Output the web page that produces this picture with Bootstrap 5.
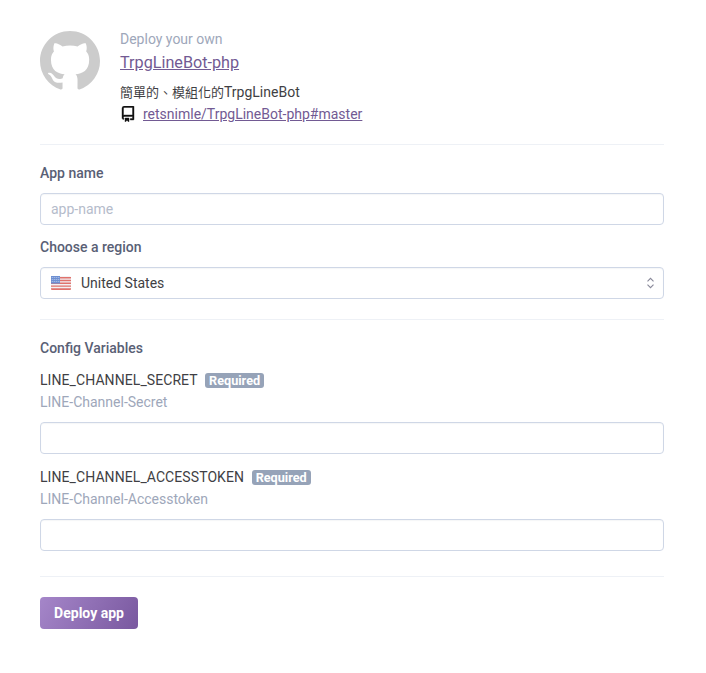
<!DOCTYPE html>
<html lang="en">
<head>
    <meta charset="UTF-8">
    <meta name="viewport" content="width=device-width, initial-scale=1.0">
    <title>Deploy your own</title>
    <link href="https://cdn.jsdelivr.net/npm/bootstrap@5.3.0/dist/css/bootstrap.min.css" rel="stylesheet">
    <style>
        body {
            background-color: #fff;
            color: #3f3f44;
            font-family: Roboto, "Noto Sans CJK TC", sans-serif;
            font-size: 14px;
            line-height: 20px;
        }
        .deploy-page {
            padding: 29px 42px 44px 40px;
        }
        .deploy-head {
            padding-bottom: 1px;
        }
        .avatar-mark {
            width: 60px;
            height: 60px;
            margin-top: 2px;
            margin-right: 20px;
            fill: #cccccc;
            flex: none;
        }
        .deploy-muted {
            color: #9ea7ba;
        }
        .deploy-link {
            color: #725a93;
        }
        .app-title {
            font-size: 16.2px;
            line-height: 24px;
            margin-top: 2px;
        }
        .app-desc {
            margin-top: 7px;
            line-height: 21px;
            font-size: 13px;
        }
        .app-desc-latin {
            font-size: 14px;
        }
        .repo-row {
            line-height: 22px;
        }
        .repo-icon {
            width: 16px;
            height: 16px;
            margin-right: 7px;
            fill: #111;
            stroke: #111;
            stroke-width: .4;
        }
        .deploy-rule {
            margin: 20px 0 18px;
            border: 0;
            border-top: 1px solid #eef1f6;
            opacity: 1;
        }
        .deploy-rule.head-rule {
            margin-top: 18px;
        }
        .deploy-rule.foot-rule {
            margin: 25px 0 20px;
        }
        .field-label {
            color: #596075;
            font-weight: 500;
            margin-bottom: 10px;
            display: block;
        }
        .field-label.region-label {
            margin-top: 12px;
        }
        .config-title {
            color: #596075;
            font-weight: 500;
            margin-bottom: 12px;
        }
        .var-group + .var-group {
            margin-top: 13px;
        }
        .var-name {
            color: #3f3f44;
            letter-spacing: .08px;
            margin-bottom: 2px;
        }
        .var-help {
            margin-bottom: 10px;
        }
        .form-control.deploy-input, .form-select.deploy-input {
            height: 32px;
            font-size: 14px;
            line-height: 20px;
            padding: 5px 10px;
            border: 1px solid #cfd7e6;
            border-radius: 4px;
            color: #3f3f44;
            box-shadow: inset 0 1px 1px rgba(89, 96, 117, .06);
        }
        .deploy-input::placeholder {
            color: #b5bccb;
        }
        .form-select.deploy-input {
            padding-left: 40px;
            background-position: right 8px center;
            background-size: 9px 12px;
            background-image: url("data:image/svg+xml,%3csvg xmlns='http://www.w3.org/2000/svg' viewBox='0 0 10 14'%3e%3cpath fill='none' stroke='%23889' stroke-width='1.3' d='M1.5 5 5 1.5 8.5 5M1.5 9 5 12.5 8.5 9'/%3e%3c/svg%3e");
        }
        .flag-icon {
            position: absolute;
            left: 11px;
            top: 9px;
            width: 20px;
            height: 14px;
        }
        .required-tag {
            background-color: #96a3b8;
            color: #fff;
            font-size: 12.7px;
            font-weight: 700;
            letter-spacing: 0;
            line-height: 15px;
            padding: 0 4px;
            border-radius: 3px;
            margin-left: 4px;
            display: inline-block;
        }
        .deploy-btn {
            color: #fff;
            font-size: 14px;
            font-weight: 700;
            line-height: 20px;
            height: 32px;
            width: 98px;
            padding: 5px 0;
            border: 0;
            border-radius: 4px;
            background-image: linear-gradient(120deg, #a586c9, #79589f);
        }
    </style>
</head>
<body>
    <div class="deploy-page">
        <div class="d-flex align-items-start deploy-head">
            <svg class="avatar-mark" viewBox="0 0 16 16" aria-hidden="true"><path fill-rule="evenodd" d="M8 0C3.58 0 0 3.58 0 8c0 3.54 2.29 6.53 5.47 7.59.4.07.55-.17.55-.38 0-.19-.01-.82-.01-1.49-2.01.37-2.53-.49-2.69-.94-.09-.23-.48-.94-.82-1.13-.28-.15-.68-.52-.01-.53.63-.01 1.08.58 1.23.82.72 1.21 1.87.87 2.33.66.07-.52.28-.87.51-1.07-1.78-.2-3.64-.89-3.64-3.95 0-.87.31-1.59.82-2.15-.08-.2-.36-1.02.08-2.12 0 0 .67-.21 2.2.82.64-.18 1.32-.27 2-.27.68 0 1.36.09 2 .27 1.53-1.04 2.2-.82 2.2-.82.44 1.1.16 1.92.08 2.12.51.56.82 1.27.82 2.15 0 3.07-1.87 3.75-3.65 3.95.29.25.54.73.54 1.48 0 1.07-.01 1.93-.01 2.2 0 .21.15.46.55.38A8.013 8.013 0 0016 8c0-4.42-3.58-8-8-8z"/></svg>
            <div>
                <div class="deploy-muted">Deploy your own</div>
                <div class="app-title"><a class="deploy-link" href="#">TrpgLineBot-php</a></div>
                <div class="app-desc">簡單的、模組化的<span class="app-desc-latin">TrpgLineBot</span></div>
                <div class="repo-row d-flex align-items-center">
                    <svg class="repo-icon" viewBox="0 0 16 16" aria-hidden="true"><path fill-rule="evenodd" d="M2 2.5A2.5 2.5 0 014.5 0h8.75a.75.75 0 01.75.75v12.5a.75.75 0 01-.75.75h-2.5a.75.75 0 110-1.5h1.75v-2h-8a1 1 0 00-.714 1.7.75.75 0 01-1.072 1.05A2.495 2.495 0 012 11.5v-9zm10.5-1V9h-8c-.356 0-.694.074-1 .208V2.5a1 1 0 011-1h8zM5 12.25v3.25a.25.25 0 00.4.2l1.45-1.087a.25.25 0 01.3 0L8.6 15.7a.25.25 0 00.4-.2v-3.25a.25.25 0 00-.25-.25h-3.5a.25.25 0 00-.25.25z"/></svg>
                    <a class="deploy-link" href="#">retsnimle/TrpgLineBot-php#master</a>
                </div>
            </div>
        </div>

        <hr class="deploy-rule head-rule">

        <form>
            <label class="field-label" for="appName">App name</label>
            <input class="form-control deploy-input" id="appName" type="text" placeholder="app-name">

            <label class="field-label region-label" for="region">Choose a region</label>
            <div class="position-relative">
                <svg class="flag-icon" viewBox="0 0 20 14" aria-hidden="true">
                    <rect width="20" height="14" rx="1.5" fill="#f3f1f3"/>
                    <path fill="#e0726c" d="M0 1h20v1.4H0zM0 3.8h20v1.4H0zM0 6.6h20v1.4H0zM0 9.4h20v1.4H0zM0 12.2h20V13a1 1 0 01-1 1H1a1 1 0 01-1-1z"/>
                    <rect width="9" height="7.6" fill="#6d8fd2"/>
                    <path stroke="#dfe7f7" stroke-width=".8" stroke-dasharray=".8 1.2" d="M.8 1.5H9M.8 3.5H9M.8 5.5H9"/>
                </svg>
                <select class="form-select deploy-input" id="region">
                    <option>United States</option>
                    <option>Europe</option>
                </select>
            </div>

            <hr class="deploy-rule">

            <div class="config-title">Config Variables</div>

            <div class="var-group">
                <label class="var-name d-block" for="secret">LINE_CHANNEL_SECRET <span class="required-tag">Required</span></label>
                <div class="deploy-muted var-help">LINE-Channel-Secret</div>
                <input class="form-control deploy-input" id="secret" type="text">
            </div>

            <div class="var-group">
                <label class="var-name d-block" for="token">LINE_CHANNEL_ACCESSTOKEN <span class="required-tag">Required</span></label>
                <div class="deploy-muted var-help">LINE-Channel-Accesstoken</div>
                <input class="form-control deploy-input" id="token" type="text">
            </div>

            <hr class="deploy-rule foot-rule">

            <button class="btn deploy-btn" type="button">Deploy app</button>
        </form>
    </div>
    <script src="https://cdn.jsdelivr.net/npm/bootstrap@5.3.0/dist/js/bootstrap.bundle.min.js"></script>
</body>
</html>
